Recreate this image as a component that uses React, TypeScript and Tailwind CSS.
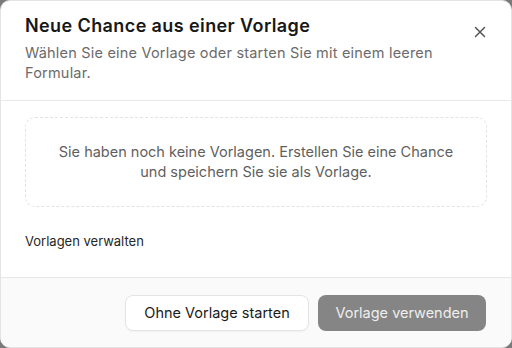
import React from "react";

export default function App() {
  return (
    <div className="w-[512px] h-[348px] bg-[#7a7a7a]" style={{ fontFamily: "Inter, 'Noto Sans', sans-serif" }}>
      <div className="w-full h-full bg-white rounded-[10px] border border-[#e4e4e4] flex flex-col overflow-hidden relative">
        <div className="px-6 pt-[13px] pb-[17px] border-b border-[#e8e8e8]">
          <h2 className="text-[18px] font-semibold text-[#171717] leading-[24px] tracking-[0.4px]">Neue Chance aus einer Vorlage</h2>
          <p className="mt-[5px] text-[14.5px] text-[#6b6b6b] leading-[20px] pr-6 tracking-[0.2px]">
            Wählen Sie eine Vorlage oder starten Sie mit einem leeren Formular.
          </p>
        </div>
        <button className="absolute right-[24px] top-[24px] text-[#555] w-[14px] h-[14px] flex items-center justify-center">
          <svg width="12" height="12" viewBox="0 0 12 12" fill="none" stroke="currentColor" strokeWidth="1.5" strokeLinecap="round">
            <path d="M1.5 1.5l9 9M10.5 1.5l-9 9" />
          </svg>
        </button>
        <div className="flex-1 px-6 pt-4">
          <div className="h-[90px] rounded-[10px] border border-dashed border-[#e3e3e3] flex items-center justify-center text-center text-[14.5px] leading-[20px] text-[#5f5f5f]">
            <p>Sie haben noch keine Vorlagen. Erstellen Sie eine Chance<br />und speichern Sie sie als Vorlage.</p>
          </div>
          <div className="mt-[25px] text-[13px] text-[#262626] leading-[18px]">Vorlagen verwalten</div>
        </div>
        <div className="h-[70px] bg-[#fafafa] border-t border-[#e6e6e6] flex items-center justify-end gap-[9px] px-[25px]">
          <button className="h-[36px] w-[184px] rounded-[8px] bg-white border border-[#e4e4e4] text-[14.5px] text-[#1a1a1a] shadow-[0_1px_2px_rgba(0,0,0,0.04)]">Ohne Vorlage starten</button>
          <button className="h-[36px] w-[168px] rounded-[8px] bg-[#858585] text-[14.5px] text-[#eeeeee]">Vorlage verwenden</button>
        </div>
      </div>
    </div>
  );
}
